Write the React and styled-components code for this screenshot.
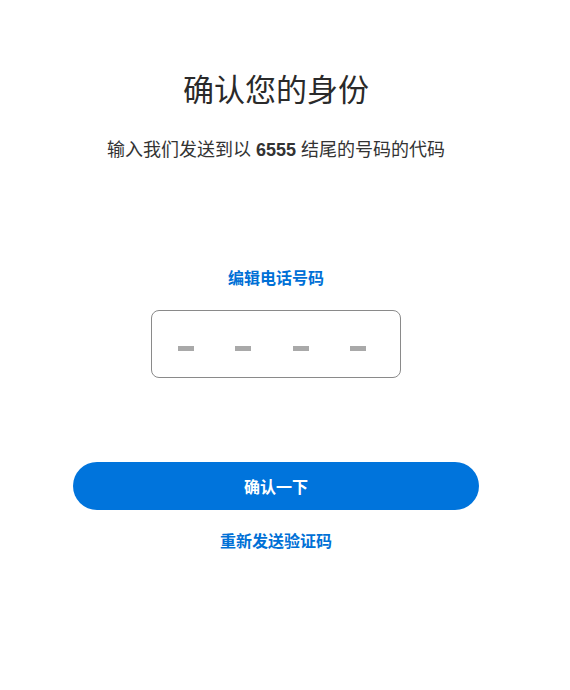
import React from "react";
import styled, { createGlobalStyle } from "styled-components";

const GlobalStyle = createGlobalStyle`
  body {
    margin: 0;
    background: #ffffff;
    font-family: "Liberation Sans", Arial, "Noto Sans CJK SC", sans-serif;
  }
`;

function CodeInput({ count }) {
  const slots = Array.from({ length: count });
  return (
    <CodeBox>
      {slots.map((_, i) => (
        <Dash key={i} />
      ))}
    </CodeBox>
  );
}

function App() {
  return (
    <>
      <GlobalStyle />
      <Page>
        <Title>确认您的身份</Title>
        <Subtitle>
          输入我们发送到以 <strong>6555</strong> 结尾的号码的代码
        </Subtitle>
        <LinkButton $top="106px">编辑电话号码</LinkButton>
        <CodeInput count={4} />
        <PrimaryButton>确认一下</PrimaryButton>
        <LinkButton $top="21px">重新发送验证码</LinkButton>
      </Page>
    </>
  );
}

const Page = styled.div`
  width: 552px;
  display: flex;
  flex-direction: column;
  align-items: center;
  padding-top: 71px;
  color: #2b2b2b;
`;

const Title = styled.h1`
  margin: 0;
  font-size: 31px;
  font-weight: 400;
  line-height: 40px;
  color: #2a2a2a;
`;

const Subtitle = styled.p`
  margin: 27px 0 0 0;
  font-size: 18px;
  line-height: 24px;
  color: #333333;
  strong {
    font-weight: 700;
  }
`;

const LinkButton = styled.button`
  margin-top: ${(p) => p.$top};
  padding: 0;
  border: none;
  background: none;
  font-family: inherit;
  font-size: 16px;
  font-weight: 700;
  line-height: 22px;
  color: #0070d6;
  cursor: pointer;
`;

const CodeBox = styled.div`
  margin-top: 20px;
  width: 250px;
  height: 68px;
  box-sizing: border-box;
  border: 1px solid #8a8a8a;
  border-radius: 8px;
  display: flex;
  align-items: center;
  justify-content: space-between;
  padding: 0 34px 0 26px;
`;

const Dash = styled.span`
  display: block;
  width: 16px;
  height: 5px;
  margin-top: 8px;
  background: #a9a9a9;
`;

const PrimaryButton = styled.button`
  margin-top: 84px;
  width: 406px;
  height: 48px;
  border: none;
  border-radius: 24px;
  background: #0074dc;
  color: #ffffff;
  font-family: inherit;
  font-size: 16px;
  font-weight: 700;
  cursor: pointer;
`;

export default App;
